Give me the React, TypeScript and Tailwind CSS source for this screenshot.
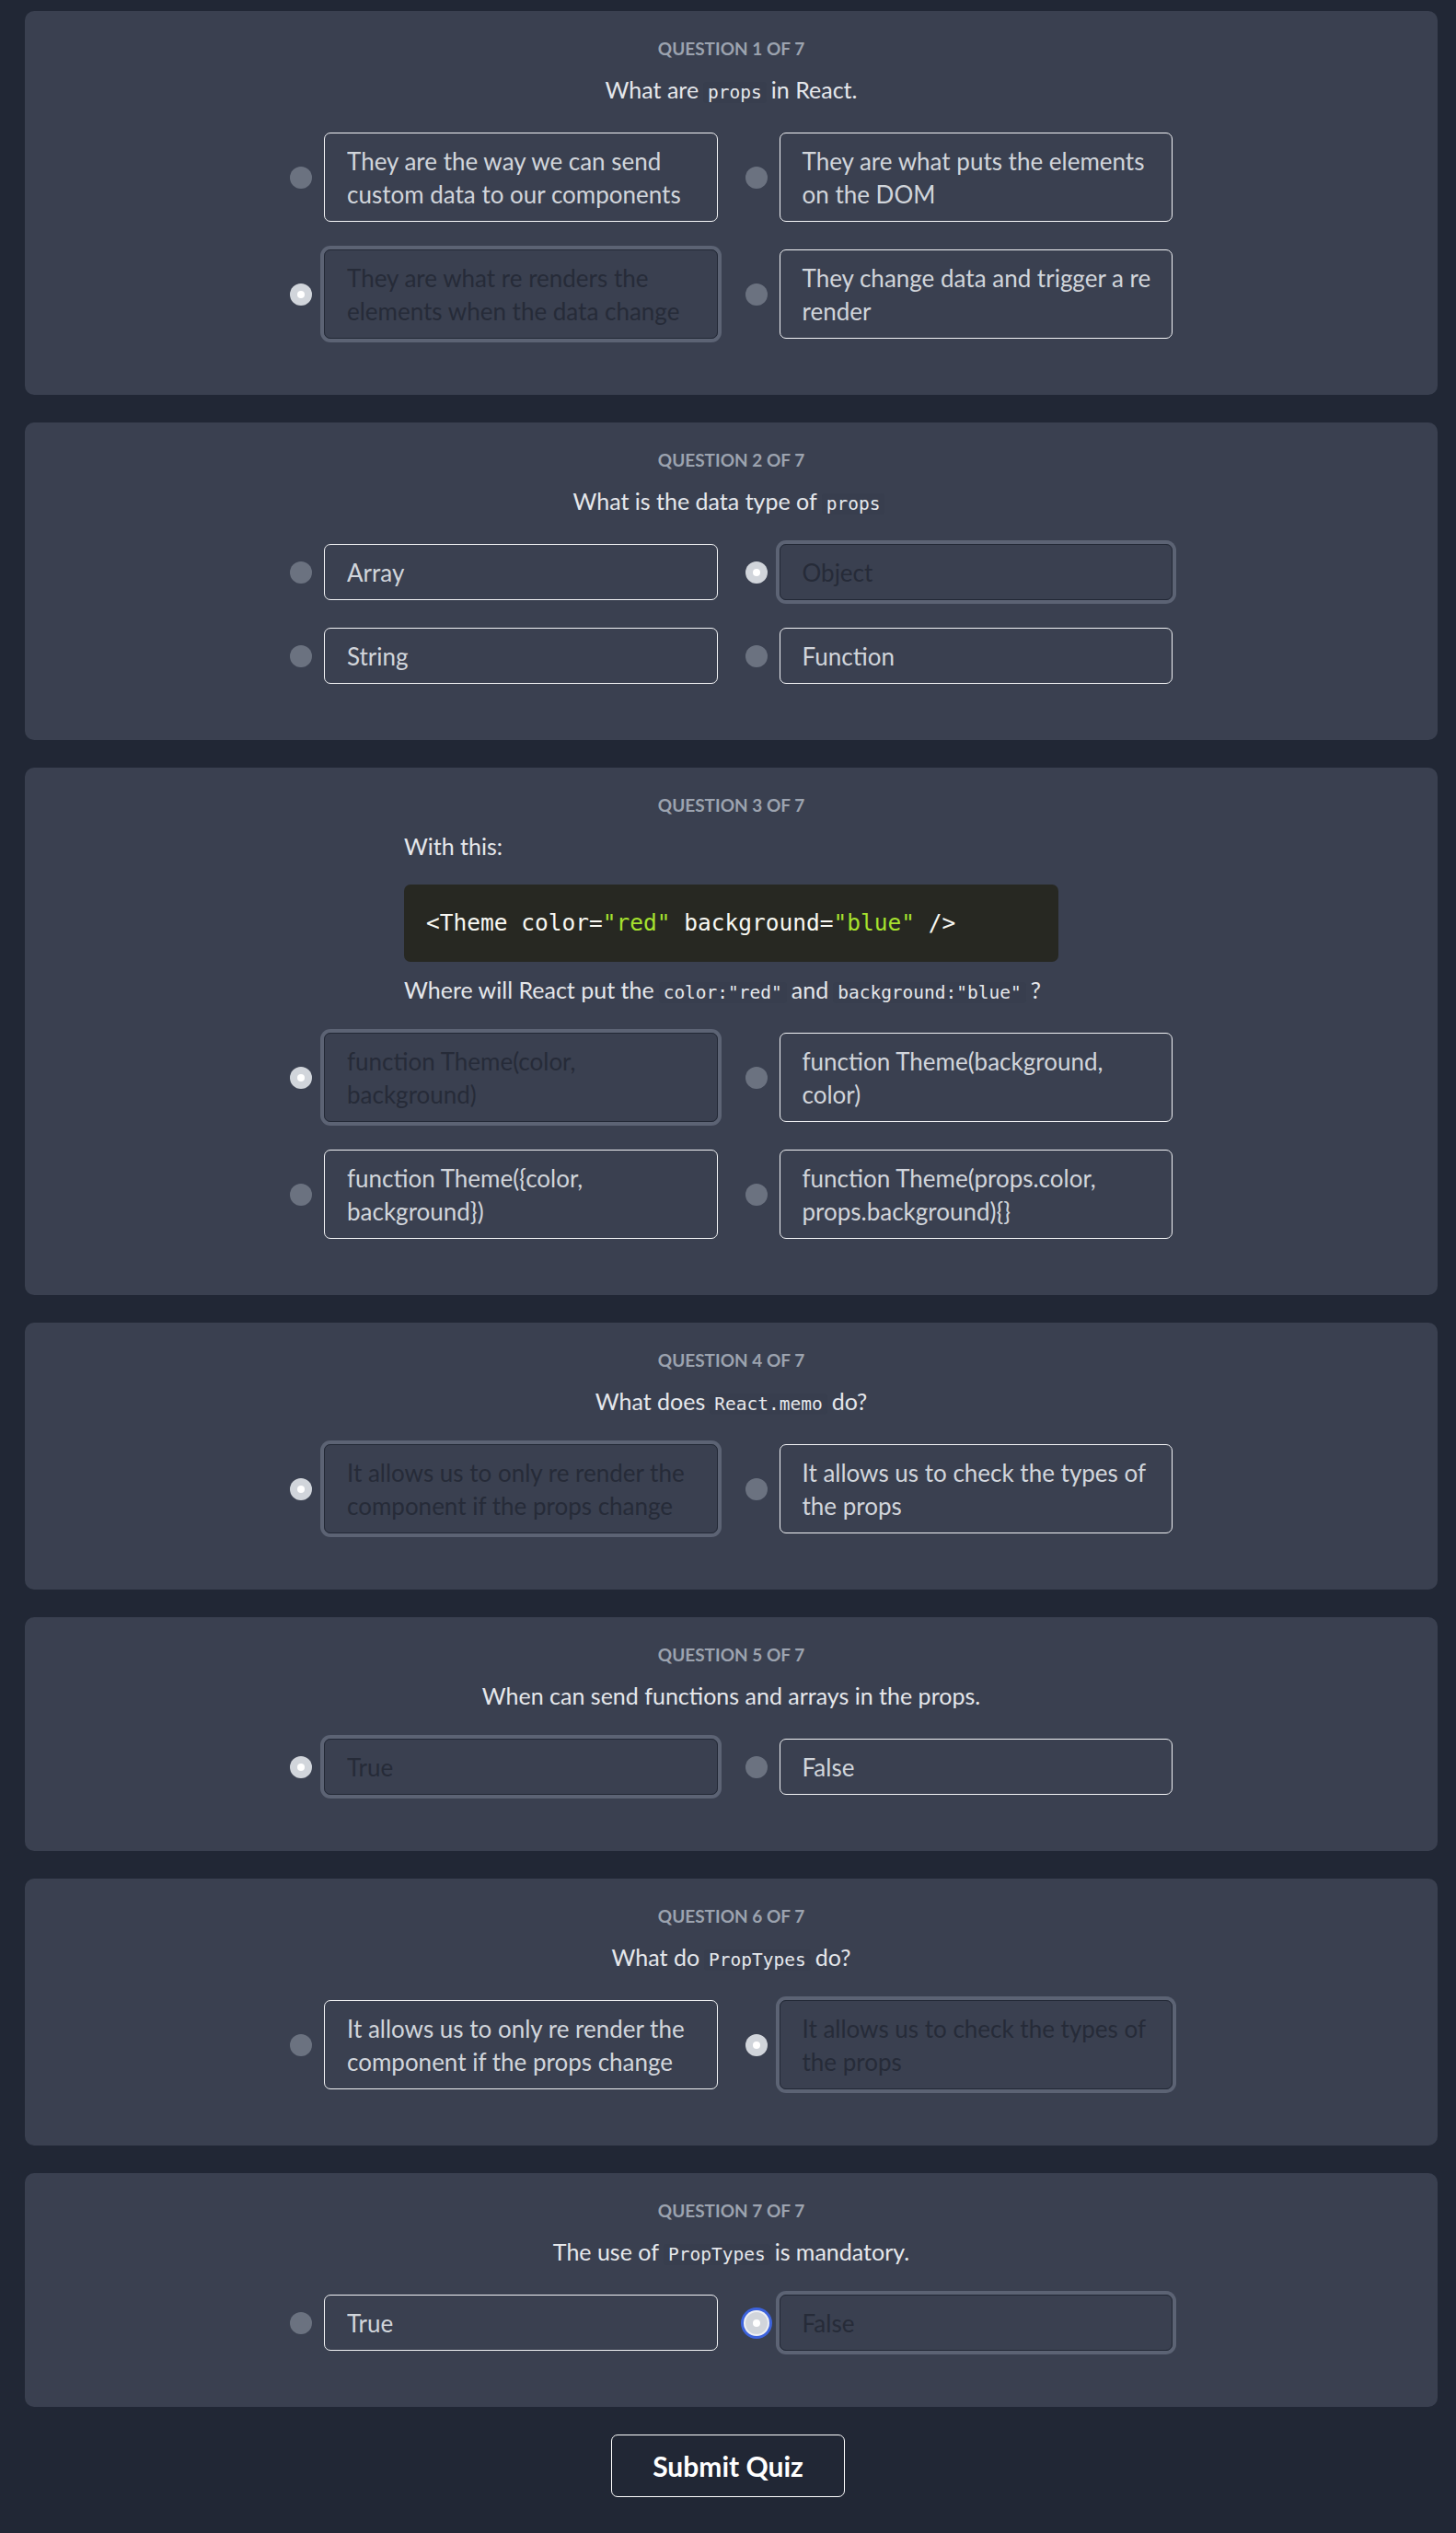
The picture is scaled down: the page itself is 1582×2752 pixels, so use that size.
import React from 'react'

type Part = string | { code: string }

type Question = {
  prompt: Part[]
  options: string[]
  selected: number
  focused?: boolean
  intro?: boolean
}

const sans = { fontFamily: 'Lato, "Noto Sans", sans-serif' }

// line breaks follow the reference layout
const questions: Question[] = [
  {
    prompt: ['What are', { code: 'props' }, 'in React.'],
    options: [
      'They are the way we can send\ncustom data to our components',
      'They are what puts the elements\non the DOM',
      'They are what re renders the\nelements when the data change',
      'They change data and trigger a re\nrender',
    ],
    selected: 2,
  },
  {
    prompt: ['What is the data type of', { code: 'props' }],
    options: ['Array', 'Object', 'String', 'Function'],
    selected: 1,
  },
  {
    prompt: [],
    intro: true,
    options: [
      'function Theme(color,\nbackground)',
      'function Theme(background,\ncolor)',
      'function Theme({color,\nbackground})',
      'function Theme(props.color,\nprops.background){}',
    ],
    selected: 0,
  },
  {
    prompt: ['What does', { code: 'React.memo' }, 'do?'],
    options: [
      'It allows us to only re render the\ncomponent if the props change',
      'It allows us to check the types of\nthe props',
    ],
    selected: 0,
  },
  {
    prompt: ['When can send functions and arrays in the props.'],
    options: ['True', 'False'],
    selected: 0,
  },
  {
    prompt: ['What do', { code: 'PropTypes' }, 'do?'],
    options: [
      'It allows us to only re render the\ncomponent if the props change',
      'It allows us to check the types of\nthe props',
    ],
    selected: 1,
  },
  {
    prompt: ['The use of', { code: 'PropTypes' }, 'is mandatory.'],
    options: ['True', 'False'],
    selected: 1,
    focused: true,
  },
]

function InlineCode({ children }: { children: string }) {
  return (
    <code className="mx-[5px] rounded px-[5px] text-[19.5px] leading-[20px] text-[#e5e7eb] bg-[#383e4e] font-['DejaVu_Sans_Mono',monospace]">
      {children}
    </code>
  )
}

function Prompt({ parts }: { parts: Part[] }) {
  return (
    <p className="mt-[11px] h-[36px] text-center text-[25px] leading-[36px] text-[#e5e7eb]">
      {parts.map((p, i) =>
        typeof p === 'string' ? (
          <span key={i}>{p}</span>
        ) : (
          <InlineCode key={i}>{p.code}</InlineCode>
        )
      )}
    </p>
  )
}

function ThemeIntro() {
  return (
    <div className="mx-auto mt-[11px] w-[711px] text-left text-[25px] leading-[36px] text-[#e5e7eb]">
      <p>With this:</p>
      <pre className="mt-[24px] flex h-[84px] items-center rounded-[7px] bg-[#272822] px-[24px] text-[24.5px] text-[#f8f8f2] font-['DejaVu_Sans_Mono',monospace]">
        {'<Theme color='}
        <span className="text-[#a6e22e]">"red"</span>
        {' background='}
        <span className="text-[#a6e22e]">"blue"</span>
        {' />'}
      </pre>
      <p className="mt-[12px] h-[36px] whitespace-nowrap">
        Where will React put the<InlineCode>color:"red"</InlineCode>and
        <InlineCode>background:"blue"</InlineCode>?
      </p>
    </div>
  )
}

function Radio({ checked, focused }: { checked: boolean; focused?: boolean }) {
  if (!checked) return <span className="h-[24px] w-[24px] shrink-0 rounded-full bg-[#6b7280]" />
  return (
    <span
      className={`flex h-[24px] w-[24px] shrink-0 items-center justify-center rounded-full bg-[#d1d5db] ${
        focused ? 'shadow-[0_0_0_2px_#eef0f4,0_0_0_5px_#3d63dd]' : ''
      }`}
    >
      <span className="h-[8px] w-[8px] rounded-full bg-white" />
    </span>
  )
}

function Option({ text, checked, focused }: { text: string; checked: boolean; focused?: boolean }) {
  return (
    <label className="flex items-center gap-[13px]">
      <Radio checked={checked} focused={focused} />
      <div
        className={`flex-1 whitespace-pre-line rounded-[7px] border py-[11.5px] pl-[24px] pr-[10px] text-[26px] leading-[36px] ${
          checked
            ? 'border-[#222835] text-[#262b38] shadow-[0_0_0_4px_#5c6374]'
            : 'border-[#f3f4f6] text-[#d1d5db]'
        }`}
      >
        {text}
      </div>
    </label>
  )
}

export default function App() {
  return (
    <div className="min-h-screen bg-[#212735] pt-[12px] pb-[36px]" style={sans}>
      <div className="ml-[27px] mr-[20px] flex flex-col gap-[30px]">
        {questions.map((q, qi) => (
          <section key={qi} className="rounded-[10px] bg-[#3a4050] pt-[26px] pb-[61px]">
            <h2 className="text-center text-[19px] font-bold uppercase leading-[30px] text-[#9ca3af]">
              Question {qi + 1} of {questions.length}
            </h2>
            {q.intro ? <ThemeIntro /> : <Prompt parts={q.prompt} />}
            <div className="mx-auto mt-[29px] grid w-[959px] grid-cols-2 gap-[30px]">
              {q.options.map((o, oi) => (
                <Option
                  key={oi}
                  text={o}
                  checked={q.selected === oi}
                  focused={q.focused && q.selected === oi}
                />
              ))}
            </div>
          </section>
        ))}
      </div>
      <div className="mt-[30px] flex justify-center">
        <button className="h-[68px] w-[254px] rounded-[7px] border border-white text-[30px] font-bold text-white">
          Submit Quiz
        </button>
      </div>
    </div>
  )
}
